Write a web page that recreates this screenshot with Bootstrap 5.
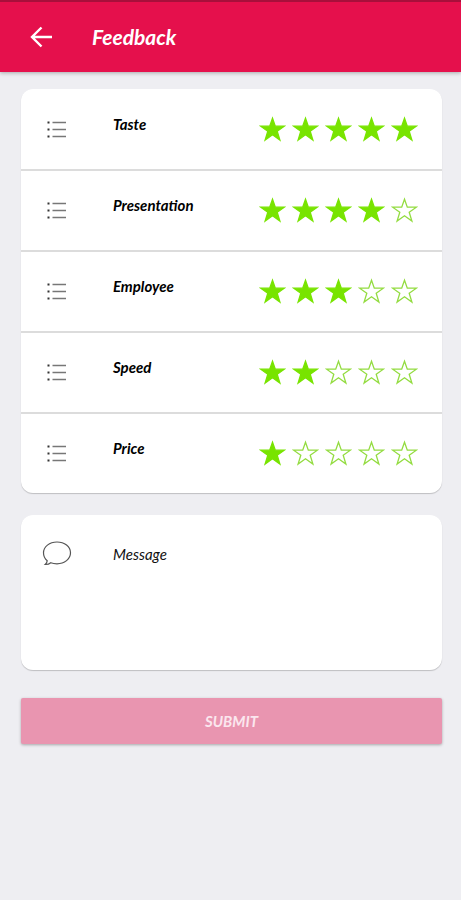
<!DOCTYPE html>
<html lang="en">
<head>
<meta charset="utf-8">
<meta name="viewport" content="width=device-width, initial-scale=1">
<title>Feedback</title>
<link href="https://cdn.jsdelivr.net/npm/bootstrap@5.3.0/dist/css/bootstrap.min.css" rel="stylesheet">
<style>
  body { background: #eeeef2; font-family: Lato, "Open Sans", sans-serif; font-style: italic; color: #111; }
  .app-bar { background: #e5104c; border-top: 2px solid #a80f3b; height: 72px; padding: 0 28px; box-shadow: 0 1px 4px rgba(0,0,0,.3); }
  .app-bar h1 { font-size: 21px; line-height: 24px; margin-left: 38px; }
  .back-link { width: 26px; height: 26px; }
  .page-body { padding: 17px 19px 17px 21px; }
  .panel { border-radius: 12px; box-shadow: 0 1px 1px rgba(0,0,0,.2); }
  .rating-panel { padding-top: 1px; }
  .rating-row { height: 81px; padding: 0 24px 2px 21px; border-bottom: 2px solid #dcdcdc; }
  .rating-row:last-child { height: 79px; border-bottom: 0; }
  .row-icon { width: 30px; height: 30px; margin-right: 41px; }
  .row-name { font-size: 15px; line-height: 20px; padding-bottom: 10px; color: #000; }
  .stars { gap: 6px; }
  .stars label { width: 27px; height: 26px; cursor: pointer; }
  .stars svg { fill: #78e400; stroke: #78e400; }
  .stars .btn-check:checked + label ~ label svg { fill: none; stroke: #93dc40; }
  .stars .btn-check:focus-visible + label { outline: 2px solid #e5104c; }
  .message-panel { height: 155px; margin-top: 22px; padding: 23px 21px 12px; }
  .message-field { padding-top: 6px; }
  .message-field label { font-size: 15px; line-height: 20px; }
  .message-field textarea { font-size: 15px; line-height: 20px; border: 0; resize: none; outline: 0; font-style: italic; }
  .submit-btn { height: 46px; margin-top: 28px; font-size: 15px; line-height: 20px; font-style: italic; background: #e995b0; color: #fbe6ee; border: 0; border-radius: 2px; box-shadow: 0 1px 3px rgba(0,0,0,.3); }
  .submit-btn:hover { background: #e57f9f; color: #fff; }
</style>
<script src="https://cdn.jsdelivr.net/npm/bootstrap@5.3.0/dist/js/bootstrap.bundle.min.js" defer></script>
</head>
<body>
<svg class="d-none" aria-hidden="true">
  <symbol id="star" viewBox="0 0 27 26"><path stroke-width="1.3" d="M13.5 2.200 16.300 10.200H25.400L18.200 15.300 20.900 24 13.500 18.800 6.100 24 8.800 15.300 1.600 10.200H10.700Z"/></symbol>
  <symbol id="list" viewBox="0 0 30 30"><path d="M10.500 8.500H24M10.500 15.500H24M10.500 22.500H24" stroke="#777" stroke-width="1.300"/><path d="M5.500 7.500h2v2h-2zM5.500 14.500h2v2h-2zM5.500 21.500h2v2h-2z" fill="#333"/></symbol>
</svg>
<header class="app-bar d-flex align-items-center text-white">
  <a href="#" class="back-link d-flex text-white" aria-label="Back">
    <svg width="26" height="26" viewBox="0 0 26 26" fill="none" stroke="currentColor" stroke-width="2.400" aria-hidden="true"><path d="M24 13H4.500M13.500 3.500 4 13 13.500 22.500"/></svg>
  </a>
  <h1 class="fw-bold mb-0">Feedback</h1>
</header>
<main class="page-body">
  <form>
    <div class="panel rating-panel bg-white" id="ratings"></div>
    <div class="panel message-panel bg-white d-flex">
      <svg class="row-icon flex-shrink-0" viewBox="0 0 30 30" fill="none" stroke="#555" stroke-width="1.200" aria-hidden="true"><path d="M15 4C7.500 4 1.500 8.700 1.500 14.800 1.500 18.200 3 21 5.200 22.800 5 24.300 4.300 25.500 3.200 26.500 5.300 26.600 7.300 26 8.800 24.800 10.700 25.500 12.800 25.800 15 25.800 22.500 25.800 28.500 21 28.500 14.800S22.500 4 15 4Z"/></svg>
      <div class="message-field d-flex flex-column flex-grow-1">
        <label for="message">Message</label>
        <textarea id="message" class="flex-grow-1 w-100 p-0 bg-transparent"></textarea>
      </div>
    </div>
    <button type="button" class="btn submit-btn w-100 fw-bold">SUBMIT</button>
  </form>
</main>
<script>
  const ratings = [["Taste", 5], ["Presentation", 4], ["Employee", 3], ["Speed", 2], ["Price", 1]];
  document.getElementById("ratings").innerHTML = ratings.map(([name, score]) => {
    const key = name.toLowerCase();
    const stars = [1, 2, 3, 4, 5].map(n =>
      `<input type="radio" class="btn-check" name="${key}" id="${key}-${n}" value="${n}"${n === score ? " checked" : ""}>` +
      `<label for="${key}-${n}" aria-label="${n} of 5"><svg class="d-block" width="27" height="26" aria-hidden="true"><use href="#star"/></svg></label>`).join("");
    return `<div class="rating-row d-flex align-items-center">
      <svg class="row-icon flex-shrink-0" aria-hidden="true"><use href="#list"/></svg>
      <span class="row-name fw-bold flex-grow-1" id="${key}-name">${name}</span>
      <div class="stars d-flex position-relative" role="radiogroup" aria-labelledby="${key}-name">${stars}</div>
    </div>`;
  }).join("");
</script>
</body>
</html>
